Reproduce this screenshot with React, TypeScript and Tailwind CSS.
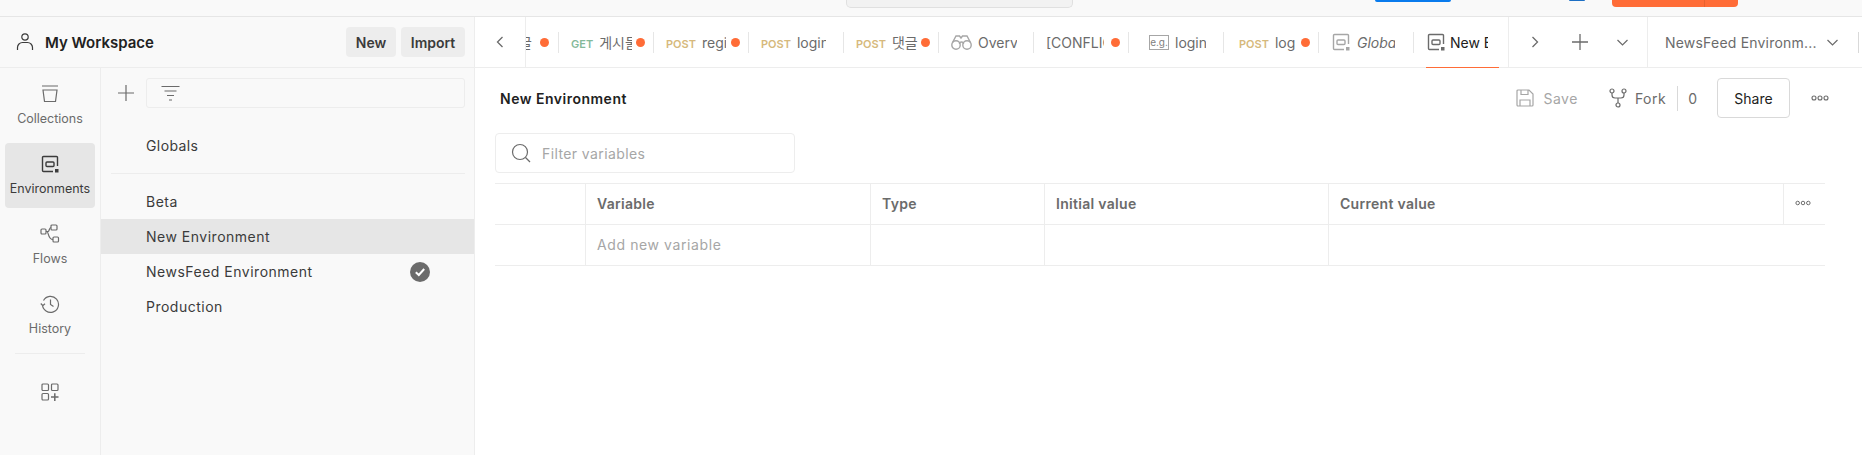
import { ReactNode } from 'react';

const font = { fontFamily: 'Inter, "Noto Sans CJK KR", sans-serif' };

const IconBox = ({ size = 20, children, className = '' }: { size?: number; children: ReactNode; className?: string }) => (
  <svg width={size} height={size} viewBox="0 0 20 20" fill="none" stroke="currentColor" strokeWidth="1.2" className={className}>
    {children}
  </svg>
);

const EnvIcon = ({ className = '', size = 20 }: { className?: string; size?: number }) => (
  <IconBox size={size} className={className}>
    <path d="M17.500 12V3.500a1 1 0 0 0-1-1h-13a1 1 0 0 0-1 1v13a1 1 0 0 0 1 1H13" strokeWidth="1.400" />
    <rect x="6" y="8" width="8" height="4.500" rx="1" strokeWidth="1.400" />
    <rect x="15" y="15" width="3.500" height="3.500" fill="currentColor" stroke="none" />
  </IconBox>
);

const Binoculars = () => (
  <svg width="21" height="18" viewBox="0 0 21 18" fill="none" stroke="#a6a6a6" strokeWidth="1.400">
    <circle cx="5" cy="12" r="4.200" />
    <circle cx="16" cy="12" r="4.200" />
    <path d="M1.500 9.500 5 3h3.500L10 5l1.500-2H16l3.500 6.500M8.500 11a2 2 0 0 1 4 0" />
  </svg>
);

const EgIcon = () => (
  <span className="flex h-[15px] w-[20px] shrink-0 items-center justify-center border border-[#a6a6a6] text-[10px] leading-none text-[#808080]">
    e.g.
  </span>
);

type Tab = {
  method?: string;
  methodColor?: string;
  name: string;
  nameWidth: string;
  pad: string;
  dot?: boolean;
  icon?: ReactNode;
  nameClass?: string;
};

const tabs: Tab[] = [
  { method: 'GET', methodColor: 'text-[#84b99a]', name: '게시물', nameWidth: 'w-[33px]', pad: 'pl-3', dot: true },
  { method: 'POST', methodColor: 'text-[#d6b97c]', name: 'register', nameWidth: 'w-[24px]', pad: 'pl-3', dot: true },
  { method: 'POST', methodColor: 'text-[#d6b97c]', name: 'login', nameWidth: 'w-[29px]', pad: 'pl-3' },
  { method: 'POST', methodColor: 'text-[#d6b97c]', name: '댓글', nameWidth: 'w-[28px]', pad: 'pl-3', dot: true },
  { icon: <Binoculars />, name: 'Overview', nameWidth: 'w-[39px]', pad: 'pl-3' },
  { name: '[CONFLICT]', nameWidth: 'w-[58px]', pad: 'pl-3', dot: true },
  { icon: <EgIcon />, name: 'login', nameWidth: 'w-[31px]', pad: 'pl-5' },
  { method: 'POST', methodColor: 'text-[#d6b97c]', name: 'login', nameWidth: 'w-[20px]', pad: 'pl-[15px]', dot: true },
  { icon: <EnvIcon className="text-[#a6a6a6]" />, name: 'Globals', nameWidth: 'w-[38px]', nameClass: 'italic', pad: 'pl-3' },
];

const TabItem = ({ tab }: { tab: Tab }) => (
  <div className="flex h-[50px] w-[95px] shrink-0 items-center">
    <div className="relative flex h-[21px] w-[95px] items-center border-r border-[#e6e6e6]">
      <div className={`flex gap-[6px] ${tab.method ? 'items-baseline' : 'items-center'} ${tab.pad}`}>
        {tab.icon}
        {tab.method && <span className={`text-[11px] font-semibold ${tab.methodColor}`}>{tab.method}</span>}
        <span className={`overflow-hidden whitespace-nowrap text-[14px] text-[#6b6b6b] ${tab.nameWidth} ${tab.nameClass ?? ''}`}>
          {tab.name}
        </span>
      </div>
      {tab.dot && <span className="absolute right-[8px] h-[9px] w-[9px] rounded-full bg-[#ff6c37]" />}
    </div>
  </div>
);

const RailItem = ({ label, active, children }: { label: string; active?: boolean; children: ReactNode }) => (
  <div
    className={`flex h-[65px] w-[90px] flex-col items-center justify-center gap-[7px] rounded-[4px] ${
      active ? 'bg-[#e6e6e6] text-[#3b3b3b]' : 'text-[#6b6b6b]'
    }`}
  >
    {children}
    <span className="text-[12.500px] leading-[16px]">{label}</span>
  </div>
);

const HeaderCell = ({ className, children }: { className: string; children?: ReactNode }) => (
  <div className={`flex h-[40px] items-center border-r border-[#ededed] pb-[2px] pl-[11px] text-[14px] font-semibold tracking-[0.3px] text-[#6b6b6b] ${className}`}>
    {children}
  </div>
);

const DotsIcon = ({ size = 18 }: { size?: number }) => (
  <svg width={size} height="6" viewBox="0 0 18 6" fill="none" stroke="#6b6b6b" strokeWidth="1.100">
    <circle cx="3" cy="3" r="2" />
    <circle cx="9" cy="3" r="2" />
    <circle cx="15" cy="3" r="2" />
  </svg>
);

const envs = ['Beta', 'New Environment', 'NewsFeed Environment', 'Production'];

export default function App() {
  return (
    <div className="flex h-[455px] w-[1862px] flex-col overflow-hidden bg-white" style={font}>
      {/* top bar, only the bottom edge of it is in the crop */}
      <div className="flex h-[17px] shrink-0 items-start border-b border-[#e6e6e6] bg-[#f9f9f9]">
        <div className="ml-[846px] h-[8px] w-[227px] rounded-b-[5px] border border-t-0 border-[#e0e0e0] bg-[#f2f2f2]" />
        <div className="ml-[302px] h-[2px] w-[76px] rounded-b-[2px] bg-[#097bed]" />
        <div className="ml-[118px] h-[1px] w-[16px] rounded-b-full bg-[#1d6fc4]" />
        <div className="ml-[27px] flex h-[7px] w-[126px] justify-end rounded-b-[4px] bg-[#ff6c37]">
          <div className="mr-[33px] h-full w-px bg-[#e8622f]" />
        </div>
      </div>

      <div className="flex min-h-0 flex-1">
        {/* sidebar */}
        <aside className="flex w-[475px] shrink-0 flex-col border-r border-[#ededed] bg-[#f9f9f9]">
          <div className="flex h-[51px] shrink-0 items-center border-b border-[#ededed] pl-[16px] pr-[9px]">
            <svg width="18" height="20" viewBox="0 0 18 20" fill="none" stroke="#3b3b3b" strokeWidth="1.200">
              <circle cx="9" cy="5" r="3.200" />
              <path d="M1.500 18v-2.500a5 5 0 0 1 5-5h5a5 5 0 0 1 5 5V18" />
            </svg>
            <span className="ml-[11px] mt-[2px] text-[15px] font-semibold text-[#212121]">My Workspace</span>
            <div className="ml-auto flex gap-[5px]">
              <div className="flex h-[30px] w-[50px] items-center justify-center rounded-[4px] bg-[#ededed] text-[14px] font-semibold text-[#3b3b3b]">
                New
              </div>
              <div className="flex h-[30px] w-[64px] items-center justify-center rounded-[4px] bg-[#ededed] text-[14px] font-semibold text-[#3b3b3b]">
                Import
              </div>
            </div>
          </div>

          <div className="flex min-h-0 flex-1">
            {/* icon rail */}
            <div className="flex w-[101px] shrink-0 flex-col items-center gap-[5px] border-r border-[#ededed] pt-[5px]">
              <RailItem label="Collections">
                <IconBox>
                  <path d="M2 2h16M3 6h14l-1.500 11.500h-11z" />
                </IconBox>
              </RailItem>
              <RailItem label="Environments" active>
                <EnvIcon />
              </RailItem>
              <RailItem label="Flows">
                <IconBox>
                  <rect x="1" y="5" width="5" height="5" rx="1" />
                  <rect x="11" y="1" width="6" height="5" rx="1" />
                  <rect x="13" y="13" width="5.500" height="5" rx="1" />
                  <path d="M6 7.500h2c1.500 0 1-4 3-4M6 7.500h1c1.500 0 1 8 6 8" />
                </IconBox>
              </RailItem>
              <RailItem label="History">
                <IconBox>
                  <path d="M3.500 6.500a8 8 0 1 1-1 4M.8 9.500l2 2.200 2.200-2" />
                  <path d="M10.500 5.500v5l3 2" />
                </IconBox>
              </RailItem>
              <div className="h-px w-[70px] shrink-0 bg-[#ededed]" />
              <div className="mt-[23px] text-[#6b6b6b]">
                <IconBox>
                  <rect x="2" y="2" width="6.500" height="6.500" rx="1" />
                  <rect x="11.500" y="2" width="6.500" height="6.500" rx="1" />
                  <rect x="2" y="11.500" width="6.500" height="6.500" rx="1" />
                  <path d="M11 15h7.500M14.800 11.200V19" strokeWidth="1.500" />
                </IconBox>
              </div>
            </div>

            {/* environment list */}
            <div className="flex min-w-0 flex-1 flex-col pt-[10px]">
              <div className="flex h-[30px] shrink-0 items-center pl-[10px] pr-[9px]">
                <svg width="34" height="18" viewBox="0 0 34 18" fill="none" stroke="#6b6b6b" strokeWidth="1.200" className="shrink-0">
                  <path d="M7 9h16M15 1v16" />
                </svg>
                <div className="ml-[1px] flex h-[30px] flex-1 items-center rounded-[3px] border border-[#ededed] pl-[14px]">
                  <svg width="19" height="16" viewBox="0 0 19 16" fill="none" stroke="#6b6b6b" strokeWidth="1.200">
                    <path d="M.5 1.500h18M3.500 6h12M6 10.500h7M8 15h3" />
                  </svg>
                </div>
              </div>
              <div className="mx-[10px] mr-[9px] flex h-[66px] shrink-0 items-center border-b border-[#ededed] pl-[35px] pt-[9px] text-[14px] tracking-[0.4px] text-[#3b3b3b]">
                Globals
              </div>
              <div className="mt-[10px]">
                {envs.map((env) => (
                  <div
                    key={env}
                    className={`flex h-[35px] items-center pl-[45px] pr-[44px] text-[14px] tracking-[0.5px] text-[#3b3b3b] ${
                      env === 'New Environment' ? 'bg-[#e6e6e6]' : ''
                    }`}
                  >
                    {env}
                    {env === 'NewsFeed Environment' && (
                      <svg width="20" height="20" viewBox="0 0 20 20" className="ml-auto">
                        <circle cx="10" cy="10" r="10" fill="#6b6b6b" />
                        <path d="M5.800 10.300 8.800 13l5.400-6" fill="none" stroke="#fff" strokeWidth="2" />
                      </svg>
                    )}
                  </div>
                ))}
              </div>
            </div>
          </div>
        </aside>

        {/* main */}
        <main className="flex min-w-0 flex-1 flex-col">
          <div className="flex h-[51px] shrink-0 border-b border-[#ededed]">
            <div className="flex w-[51px] shrink-0 items-center justify-center border-r border-[#ededed]">
              <svg width="8" height="12" viewBox="0 0 8 12" fill="none" stroke="#6b6b6b" strokeWidth="1.300">
                <path d="M6.500 1 1.500 6l5 5" />
              </svg>
            </div>
            {/* first tab is scrolled mostly out of view */}
            <div className="flex h-[50px] w-[33px] shrink-0 items-center">
              <div className="relative flex h-[21px] w-[33px] items-center overflow-hidden border-r border-[#e6e6e6]">
                <span className="ml-[-7px] text-[14px] text-[#6b6b6b]">글</span>
                <span className="absolute right-[9px] h-[9px] w-[9px] rounded-full bg-[#ff6c37]" />
              </div>
            </div>
            {tabs.map((tab, i) => (
              <TabItem key={i} tab={tab} />
            ))}
            <div className="relative flex h-[50px] w-[95px] shrink-0 items-center border-r border-[#ededed] pl-3">
              <EnvIcon className="shrink-0 text-[#6b6b6b]" />
              <span className="ml-[4px] w-[38px] overflow-hidden whitespace-nowrap text-[14px] text-[#212121]">New Environment</span>
              <span className="absolute bottom-[-1px] left-[12px] h-px w-[73px] bg-[#ff6c37]" />
            </div>
            <div className="flex w-[139px] shrink-0 items-center border-r border-[#ededed] pl-[22px]">
              <svg width="8" height="12" viewBox="0 0 8 12" fill="none" stroke="#6b6b6b" strokeWidth="1.300">
                <path d="M1.500 1l5 5-5 5" />
              </svg>
              <svg width="16" height="16" viewBox="0 0 16 16" fill="none" stroke="#6b6b6b" strokeWidth="1.300" className="ml-[33px]">
                <path d="M0 8h16M8 0v16" />
              </svg>
              <svg width="11" height="7" viewBox="0 0 11 7" fill="none" stroke="#6b6b6b" strokeWidth="1.200" className="ml-[29px]">
                <path d="M.5 1l5 5 5-5" />
              </svg>
            </div>
            <div className="flex min-w-0 flex-1 items-center pl-[17px]">
              <span className="w-[144px] shrink-0 whitespace-nowrap text-[14px] tracking-[0.2px] text-[#6b6b6b]">NewsFeed Environm...</span>
              <svg width="11" height="7" viewBox="0 0 11 7" fill="none" stroke="#6b6b6b" strokeWidth="1.200" className="ml-[18px] shrink-0">
                <path d="M.5 1l5 5 5-5" />
              </svg>
              <div className="ml-[20px] h-[21px] w-px shrink-0 bg-[#d9d9d9]" />
            </div>
          </div>

          {/* title bar */}
          <div className="flex h-[60px] shrink-0 items-center pl-[25px] pr-[33px]">
            <span className="text-[14px] font-semibold tracking-[0.5px] text-[#212121]">New Environment</span>
            <div className="ml-auto flex items-center">
              <svg width="18" height="18" viewBox="0 0 18 18" fill="none" stroke="#a6a6a6" strokeWidth="1.200">
                <path d="M1 2a1 1 0 0 1 1-1h11l4 4v11a1 1 0 0 1-1 1H2a1 1 0 0 1-1-1zM5 1v4.500h7V1M4 17v-6h10v6" />
              </svg>
              <span className="ml-[9px] text-[14px] tracking-[0.5px] text-[#a6a6a6]">Save</span>
              <svg width="18" height="20" viewBox="0 0 18 20" fill="none" stroke="#6b6b6b" strokeWidth="1.200" className="ml-[31px]">
                <circle cx="3" cy="3" r="2" />
                <circle cx="15" cy="3" r="2" />
                <circle cx="9" cy="17" r="2" />
                <path d="M3 5v2a3 3 0 0 0 3 3h6a3 3 0 0 0 3-3V5M9 10v5" />
              </svg>
              <span className="ml-[8px] text-[14px] tracking-[0.5px] text-[#6b6b6b]">Fork</span>
              <div className="ml-[11px] h-[25px] w-px bg-[#d9d9d9]" />
              <span className="ml-[10px] text-[14px] text-[#6b6b6b]">0</span>
              <div className="ml-[20px] flex h-[40px] w-[73px] items-center justify-center rounded-[4px] border border-[#d9d9d9] text-[14px] text-[#212121]">
                Share
              </div>
              <div className="ml-[21px]">
                <DotsIcon />
              </div>
            </div>
          </div>

          {/* filter */}
          <div className="ml-[20px] mt-[5px] flex h-[40px] w-[300px] shrink-0 items-center rounded-[4px] border border-[#ededed] pl-[15px]">
            <svg width="20" height="20" viewBox="0 0 20 20" fill="none" stroke="#6b6b6b" strokeWidth="1.200">
              <circle cx="9" cy="9" r="7.500" />
              <path d="M14.500 14.500 19 19" />
            </svg>
            <span className="ml-[11px] text-[14px] tracking-[0.4px] text-[#a6a6a6]">Filter variables</span>
          </div>

          {/* table */}
          <div className="ml-[20px] mr-[37px] mt-[10px] border-y border-[#ededed]">
            <div className="flex border-b border-[#ededed]">
              <HeaderCell className="w-[91px]" />
              <HeaderCell className="w-[285px] pl-[10px]">Variable</HeaderCell>
              <HeaderCell className="w-[174px]">Type</HeaderCell>
              <HeaderCell className="w-[284px] pl-[9px]">Initial value</HeaderCell>
              <HeaderCell className="w-[455px] pl-[10px]">Current value</HeaderCell>
              <div className="flex h-[40px] flex-1 items-center pb-[2px] pl-[11px]">
                <DotsIcon size={16} />
              </div>
            </div>
            <div className="flex">
              <HeaderCell className="w-[91px]" />
              <HeaderCell className="w-[285px]">
                <span className="font-normal tracking-[0.6px] text-[#a6a6a6]">Add new variable</span>
              </HeaderCell>
              <HeaderCell className="w-[174px]" />
              <HeaderCell className="w-[284px]" />
            </div>
          </div>
        </main>
      </div>
    </div>
  );
}
